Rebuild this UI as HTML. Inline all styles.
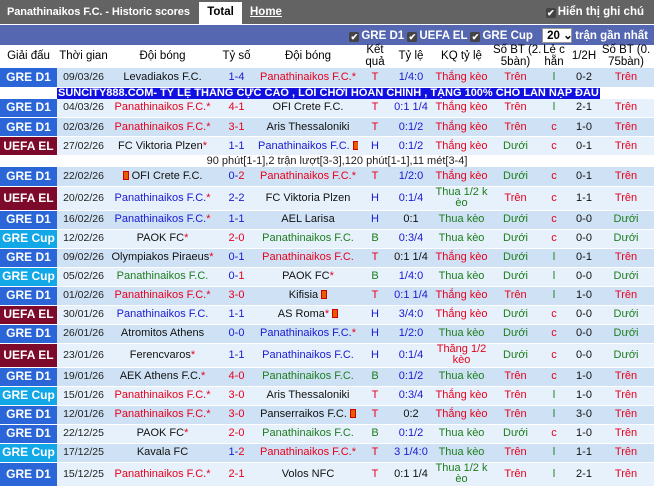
<!DOCTYPE html>
<html><head><meta charset="utf-8"><style>
*{margin:0;padding:0;box-sizing:border-box}
body{width:654px;height:489px;background:#fff;font-family:"Liberation Sans",Arial,sans-serif;font-size:11px;color:#222;overflow:hidden;position:relative}
.top{position:absolute;left:0;top:0;width:654px;height:24px;background:#636363;color:#fff;font-weight:bold;font-size:11px}
.top .t{position:absolute;left:7px;top:6px;letter-spacing:-0.1px}
.tab{position:absolute;left:199px;top:2px;width:43px;height:22px;background:#fff;color:#000;text-align:center;line-height:21px;font-size:11.5px}
.home{position:absolute;left:250px;top:6px;text-decoration:underline;font-size:11.5px}
.note{position:absolute;right:10px;top:6px;font-size:11.5px}
.cb{display:inline-block;width:10px;height:10px;background:#444;border-radius:2px;color:#fff;font-size:9px;line-height:10px;text-align:center;vertical-align:-1px;margin-right:2px}
.bar{position:absolute;left:0;top:25px;width:654px;height:20px;background:#5467b0;color:#fff;font-weight:bold;font-size:11.5px}
.bar .in{position:absolute;right:6px;top:3px;white-space:nowrap}
.sel{display:inline-block;background:#fff;color:#000;width:30px;height:15px;line-height:14px;padding-left:4px;margin:0 3px 0 6px;border:1px solid #999}
table{position:absolute;left:0;top:45px;border-collapse:collapse;table-layout:fixed;width:654px}
td,th{text-align:center;padding:0;white-space:nowrap;overflow:hidden;line-height:11px}
th{font-weight:normal;color:#000;height:23px;font-size:11.5px;line-height:11.5px;overflow:visible;background:#fff}
tr.h{height:23px}
tr.r{height:19px}
tr.r td{border-bottom:1px solid #fff}
tr.tall{height:24px}
tr.d td{background:#cfe2f5}
tr.l td{background:#e6f1fb}
td.c{color:#fff;font-weight:bold;font-size:12px}
.d1{background:#2a66d8!important}.el{background:#7d0a2a!important}.cup{background:#12a8e8!important}
.dt{font-size:10.5px;color:#222}
.R{color:#e8001c}.B{color:#1a1ad0}.G{color:#1d7d1d}.K{color:#111}
tr.ad{height:11px}
.ad td{background:#fff;line-height:11px}
.adb{background:#1010e0;color:#fff;font-weight:bold;display:inline-block;line-height:11px;padding:0 1px;font-size:11px}
tr.nt{height:11px}
.nt td{background:#fff;font-size:11px;line-height:11px}
.fl{display:inline-block;width:6px;height:9px;background:#e85b00;border:1px solid #c00;vertical-align:-1px}
</style></head><body>
<div class="top"><span class="t">Panathinaikos F.C. - Historic scores</span><div class="tab">Total</div><span class="home">Home</span><span class="note"><span class="cb">✔</span>Hiển thị ghi chú</span></div>
<div class="bar"><div class="in"><span class="cb">✔</span>GRE D1 <span class="cb">✔</span>UEFA EL <span class="cb">✔</span>GRE Cup <span class="sel">20 ⌄</span>trận gần nhất</div></div>
<table>
<colgroup><col style="width:57px"><col style="width:53px"><col style="width:105px"><col style="width:43px"><col style="width:100px"><col style="width:34px"><col style="width:38px"><col style="width:63px"><col style="width:45px"><col style="width:32px"><col style="width:28px"><col style="width:56px"></colgroup>
<tr class="h"><th>Giải đấu</th><th>Thời gian</th><th>Đội bóng</th><th>Tỷ số</th><th>Đội bóng</th><th>Kết<br>quả</th><th>Tỷ lệ</th><th>KQ tỷ lệ</th><th>Số BT (2.<br>5bàn)</th><th>Lẻ c<br>hẵn</th><th>1/2H</th><th>Số BT (0.<br>75bàn)</th></tr>
<tr class="r d"><td class="c d1">GRE D1</td><td class="dt">09/03/26</td><td class="K">Levadiakos F.C.</td><td class="B">1-4</td><td class="R">Panathinaikos F.C.*</td><td class="R">T</td><td class="B">1/4:0</td><td class="R">Thắng kèo</td><td class="R">Trên</td><td class="G">l</td><td class="K">0-2</td><td class="R">Trên</td></tr>
<tr class="ad"><td></td><td colspan="11" style="text-align:left"><span class="adb">SUNCITY888.COM- TỶ LỆ THẮNG CỰC CAO , LỐI CHƠI HOÀN CHỈNH , TẶNG 100% CHO LẦN NẠP ĐẦU</span></td></tr>
<tr class="r l"><td class="c d1">GRE D1</td><td class="dt">04/03/26</td><td class="R">Panathinaikos F.C.*</td><td class="R">4-1</td><td class="K">OFI Crete F.C.</td><td class="R">T</td><td class="B">0:1 1/4</td><td class="R">Thắng kèo</td><td class="R">Trên</td><td class="G">l</td><td class="K">2-1</td><td class="R">Trên</td></tr>
<tr class="r d"><td class="c d1">GRE D1</td><td class="dt">02/03/26</td><td class="R">Panathinaikos F.C.*</td><td class="R">3-1</td><td class="K">Aris Thessaloniki</td><td class="R">T</td><td class="B">0:1/2</td><td class="R">Thắng kèo</td><td class="R">Trên</td><td class="R">c</td><td class="K">1-0</td><td class="R">Trên</td></tr>
<tr class="r l"><td class="c el">UEFA EL</td><td class="dt">27/02/26</td><td class="K">FC Viktoria Plzen<span class="R">*</span></td><td class="B">1-1</td><td class="B">Panathinaikos F.C. <span class="fl"></span></td><td class="B">H</td><td class="B">0:1/2</td><td class="R">Thắng kèo</td><td class="G">Dưới</td><td class="R">c</td><td class="K">0-1</td><td class="R">Trên</td></tr>
<tr class="nt"><td colspan="12" style="padding-left:20px">90 phút[1-1],2 trận lượt[3-3],120 phút[1-1],11 mét[3-4]</td></tr>
<tr class="r d"><td class="c d1">GRE D1</td><td class="dt">22/02/26</td><td class="K"><span class="fl"></span> OFI Crete F.C.</td><td><span class="B">0-</span><span class="R">2</span></td><td class="R">Panathinaikos F.C.*</td><td class="R">T</td><td class="B">1/2:0</td><td class="R">Thắng kèo</td><td class="G">Dưới</td><td class="R">c</td><td class="K">0-1</td><td class="R">Trên</td></tr>
<tr class="r l tall"><td class="c el">UEFA EL</td><td class="dt">20/02/26</td><td class="B">Panathinaikos F.C.<span class="R">*</span></td><td class="B">2-2</td><td class="K">FC Viktoria Plzen</td><td class="B">H</td><td class="B">0:1/4</td><td class="G">Thua 1/2 k<br>èo</td><td class="R">Trên</td><td class="R">c</td><td class="K">1-1</td><td class="R">Trên</td></tr>
<tr class="r d"><td class="c d1">GRE D1</td><td class="dt">16/02/26</td><td class="B">Panathinaikos F.C.<span class="R">*</span></td><td class="B">1-1</td><td class="K">AEL Larisa</td><td class="B">H</td><td class="K">0:1</td><td class="G">Thua kèo</td><td class="G">Dưới</td><td class="R">c</td><td class="K">0-0</td><td class="G">Dưới</td></tr>
<tr class="r l"><td class="c cup">GRE Cup</td><td class="dt">12/02/26</td><td class="K">PAOK FC<span class="R">*</span></td><td class="R">2-0</td><td class="G">Panathinaikos F.C.</td><td class="G">B</td><td class="B">0:3/4</td><td class="G">Thua kèo</td><td class="G">Dưới</td><td class="R">c</td><td class="K">0-0</td><td class="G">Dưới</td></tr>
<tr class="r d"><td class="c d1">GRE D1</td><td class="dt">09/02/26</td><td class="K">Olympiakos Piraeus<span class="R">*</span></td><td class="B">0-1</td><td class="R">Panathinaikos F.C.</td><td class="R">T</td><td class="K">0:1 1/4</td><td class="R">Thắng kèo</td><td class="G">Dưới</td><td class="G">l</td><td class="K">0-1</td><td class="R">Trên</td></tr>
<tr class="r l"><td class="c cup">GRE Cup</td><td class="dt">05/02/26</td><td class="G">Panathinaikos F.C.</td><td><span class="B">0-</span><span class="R">1</span></td><td class="K">PAOK FC<span class="R">*</span></td><td class="G">B</td><td class="B">1/4:0</td><td class="G">Thua kèo</td><td class="G">Dưới</td><td class="G">l</td><td class="K">0-0</td><td class="G">Dưới</td></tr>
<tr class="r d"><td class="c d1">GRE D1</td><td class="dt">01/02/26</td><td class="R">Panathinaikos F.C.*</td><td class="R">3-0</td><td class="K">Kifisia <span class="fl"></span></td><td class="R">T</td><td class="B">0:1 1/4</td><td class="R">Thắng kèo</td><td class="R">Trên</td><td class="G">l</td><td class="K">1-0</td><td class="R">Trên</td></tr>
<tr class="r l"><td class="c el">UEFA EL</td><td class="dt">30/01/26</td><td class="B">Panathinaikos F.C.</td><td class="B">1-1</td><td class="K">AS Roma<span class="R">*</span> <span class="fl"></span></td><td class="B">H</td><td class="B">3/4:0</td><td class="R">Thắng kèo</td><td class="G">Dưới</td><td class="R">c</td><td class="K">0-0</td><td class="G">Dưới</td></tr>
<tr class="r d"><td class="c d1">GRE D1</td><td class="dt">26/01/26</td><td class="K">Atromitos Athens</td><td class="B">0-0</td><td class="B">Panathinaikos F.C.<span class="R">*</span></td><td class="B">H</td><td class="B">1/2:0</td><td class="G">Thua kèo</td><td class="G">Dưới</td><td class="R">c</td><td class="K">0-0</td><td class="G">Dưới</td></tr>
<tr class="r l tall"><td class="c el">UEFA EL</td><td class="dt">23/01/26</td><td class="K">Ferencvaros<span class="R">*</span></td><td class="B">1-1</td><td class="B">Panathinaikos F.C.</td><td class="B">H</td><td class="B">0:1/4</td><td class="R">Thắng 1/2<br>kèo</td><td class="G">Dưới</td><td class="R">c</td><td class="K">0-0</td><td class="G">Dưới</td></tr>
<tr class="r d"><td class="c d1">GRE D1</td><td class="dt">19/01/26</td><td class="K">AEK Athens F.C.<span class="R">*</span></td><td class="R">4-0</td><td class="G">Panathinaikos F.C.</td><td class="G">B</td><td class="B">0:1/2</td><td class="G">Thua kèo</td><td class="R">Trên</td><td class="R">c</td><td class="K">1-0</td><td class="R">Trên</td></tr>
<tr class="r l"><td class="c cup">GRE Cup</td><td class="dt">15/01/26</td><td class="R">Panathinaikos F.C.*</td><td class="R">3-0</td><td class="K">Aris Thessaloniki</td><td class="R">T</td><td class="B">0:3/4</td><td class="R">Thắng kèo</td><td class="R">Trên</td><td class="G">l</td><td class="K">1-0</td><td class="R">Trên</td></tr>
<tr class="r d"><td class="c d1">GRE D1</td><td class="dt">12/01/26</td><td class="R">Panathinaikos F.C.*</td><td class="R">3-0</td><td class="K">Panserraikos F.C. <span class="fl"></span></td><td class="R">T</td><td class="K">0:2</td><td class="R">Thắng kèo</td><td class="R">Trên</td><td class="G">l</td><td class="K">3-0</td><td class="R">Trên</td></tr>
<tr class="r l"><td class="c d1">GRE D1</td><td class="dt">22/12/25</td><td class="K">PAOK FC<span class="R">*</span></td><td class="R">2-0</td><td class="G">Panathinaikos F.C.</td><td class="G">B</td><td class="B">0:1/2</td><td class="G">Thua kèo</td><td class="G">Dưới</td><td class="R">c</td><td class="K">1-0</td><td class="R">Trên</td></tr>
<tr class="r d"><td class="c cup">GRE Cup</td><td class="dt">17/12/25</td><td class="K">Kavala FC</td><td><span class="B">1-</span><span class="R">2</span></td><td class="R">Panathinaikos F.C.*</td><td class="R">T</td><td class="B">3 1/4:0</td><td class="G">Thua kèo</td><td class="R">Trên</td><td class="G">l</td><td class="K">1-1</td><td class="R">Trên</td></tr>
<tr class="r l tall"><td class="c d1">GRE D1</td><td class="dt">15/12/25</td><td class="R">Panathinaikos F.C.*</td><td class="R">2-1</td><td class="K">Volos NFC</td><td class="R">T</td><td class="K">0:1 1/4</td><td class="G">Thua 1/2 k<br>èo</td><td class="R">Trên</td><td class="G">l</td><td class="K">2-1</td><td class="R">Trên</td></tr>
</table>
</body></html>
